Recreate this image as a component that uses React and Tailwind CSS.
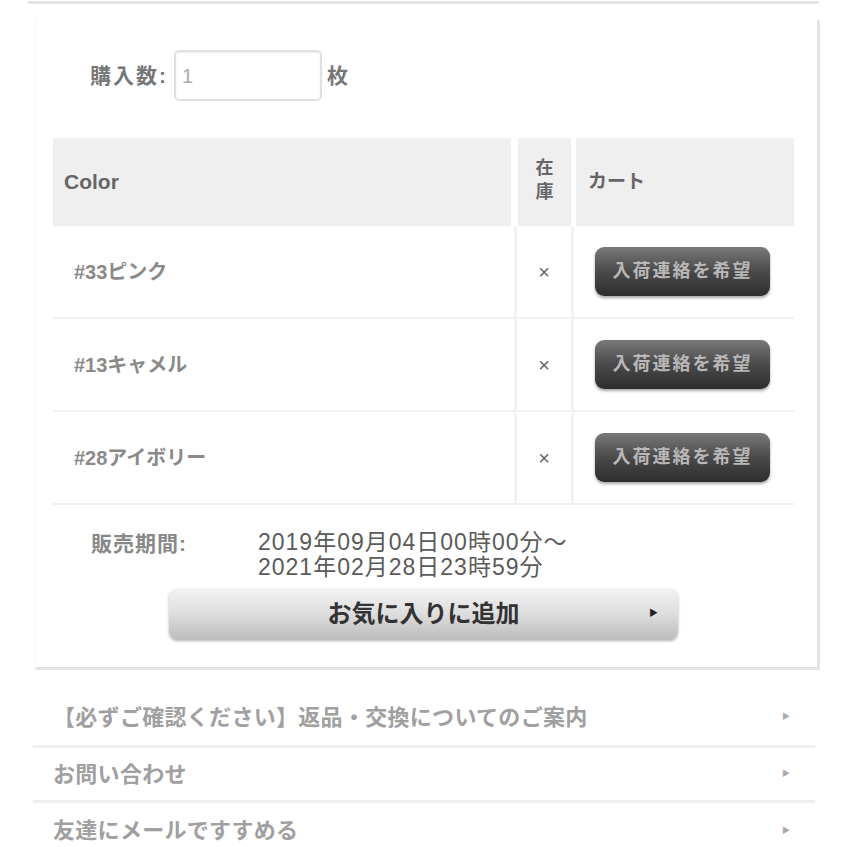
import React from "react";

const jp = { fontFamily: '"Liberation Sans", "Noto Sans CJK JP", sans-serif' };

function Row({ name }) {
  return (
    <div className="flex h-[93px] border-b-2 border-[#f1f1f1]">
      <div className="w-[461px] flex items-center pl-[21px] text-[20px] font-bold text-[#8a8a8a]">{name}</div>
      <div className="w-[3px] bg-[#f2f2f2]" />
      <div className="w-[54px] flex items-center justify-center text-[20px] text-[#666]">×</div>
      <div className="w-[3px] bg-[#f2f2f2]" />
      <div className="flex-1 flex items-center pl-[21px]">
        <button className="w-[175px] h-[49px] rounded-[9px] bg-gradient-to-b from-[#7a7a7a] via-[#4a4a4a] to-[#2e2e2e] shadow-[0_2px_3px_rgba(0,0,0,0.35)] text-[18px] font-bold text-[#b8b8b8] tracking-[2px]">
          入荷連絡を希望
        </button>
      </div>
    </div>
  );
}

function ListItem({ text, pl, h, border = true }) {
  return (
    <div className={`flex items-center justify-between ${h} ${border ? "border-b-[3px] border-[#efefef]" : ""}`}>
      <span className={`${pl} text-[22px] text-[#a0a0a0] font-bold tracking-[0.3px]`}>{text}</span>
      <span className="mr-[25px] text-[8px] text-[#aaa]">▶</span>
    </div>
  );
}

export default function App() {
  return (
    <div className="w-[847px] h-[847px] bg-white overflow-hidden" style={jp}>
      <div className="mx-[28px] h-[4px] border-b-[3px] border-[#e6e6e6]" />
      <div className="ml-[35px] mt-[16px] w-[785px] h-[650px] border-r-[3px] border-b-[3px] border-[#e4e4e4] border-l border-l-[#f6f6f6] flex flex-col">
        <div className="flex items-center mt-[30px] pl-[54px]">
          <span className="text-[21px] font-bold text-[#777] tracking-[2px]">購入数:</span>
          <div className="ml-[6px] w-[148px] h-[51px] rounded-[5px] border-2 border-[#e0e0e0] shadow-[inset_0_1px_2px_rgba(0,0,0,0.08)] flex items-center pl-[6px] text-[20px] text-[#aaa]">
            1
          </div>
          <span className="ml-[5px] text-[21px] font-bold text-[#777]">枚</span>
        </div>
        <div className="ml-[17px] mt-[37px] w-[741px] flex flex-col">
          <div className="flex h-[88px]">
            <div className="w-[458px] bg-[#efefef] flex items-center pl-[11px] text-[21px] font-bold text-[#666]">Color</div>
            <div className="w-[7px]" />
            <div className="w-[53px] bg-[#efefef] flex items-start justify-center pt-[18px]">
              <span className="text-[18px] font-bold text-[#666] leading-[24px] w-[19px] text-center">在庫</span>
            </div>
            <div className="w-[5px]" />
            <div className="flex-1 bg-[#efefef] flex items-center pl-[12px] text-[19px] font-bold text-[#666]">カート</div>
          </div>
          <Row name="#33ピンク" />
          <Row name="#13キャメル" />
          <Row name="#28アイボリー" />
        </div>
        <div className="flex pl-[55px] mt-[25px]">
          <span className="w-[167px] text-[21px] text-[#888] font-bold leading-[28px] tracking-[1px]">販売期間:</span>
          <div className="text-[23px] text-[#5a5a5a] leading-[25px] tracking-[1px]">
            <div>2019年09月04日00時00分～</div>
            <div>2021年02月28日23時59分</div>
          </div>
        </div>
        <div className="ml-[133px] mt-[8px] w-[509px] h-[51px] rounded-[8px] bg-gradient-to-b from-[#f4f4f4] via-[#dedede] to-[#bdbdbd] shadow-[0_2px_3px_rgba(0,0,0,0.3)] relative flex items-center justify-center">
          <span className="text-[24px] font-bold text-[#333]">お気に入りに追加</span>
          <span className="absolute right-[20px] text-[9px] text-[#222]">▶</span>
        </div>
      </div>
      <div className="ml-[33px] w-[782px] mt-[19px]">
        <ListItem text="【必ずご確認ください】返品・交換についてのご案内" pl="pl-[20px]" h="h-[59px]" />
        <ListItem text="お問い合わせ" pl="pl-[20px]" h="h-[55px]" />
        <ListItem text="友達にメールですすめる" pl="pl-[20px]" h="h-[55px]" border={false} />
      </div>
    </div>
  );
}
